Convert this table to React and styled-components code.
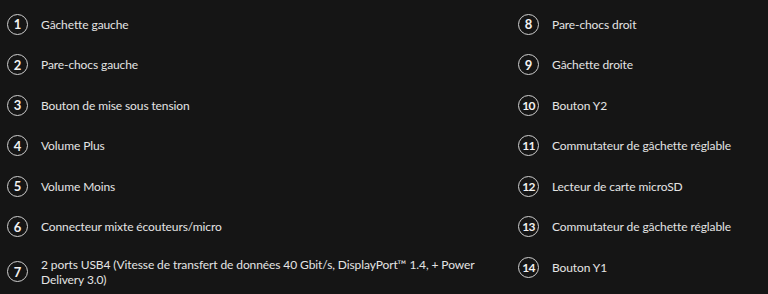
import React from 'react';
import styled, { createGlobalStyle } from 'styled-components';

const GlobalStyle = createGlobalStyle`
  html, body {
    margin: 0;
    padding: 0;
    background: #151515;
  }
`;

const Root = styled.div`
  width: 768px;
  height: 294px;
  box-sizing: border-box;
  padding: 4px 0 0 7px;
  display: grid;
  grid-template-columns: 480px 1fr;
  column-gap: 31px;
  font-family: Lato, 'Noto Sans', sans-serif;
  color: #e4e4e4;
  overflow: hidden;
`;

const List = styled.ul`
  list-style: none;
  margin: 0;
  padding: 0;
`;

const Item = styled.li`
  display: flex;
  align-items: center;
  gap: 13px;
  padding: 9.75px 0;
`;

const Badge = styled.span`
  flex: none;
  width: 21px;
  height: 21px;
  box-sizing: border-box;
  border: 1.5px solid #cfcfcf;
  border-radius: 50%;
  display: flex;
  align-items: center;
  justify-content: center;
  font-size: ${(p) => (p.$wide ? '12px' : '13px')};
  font-weight: 700;
  color: #f2f2f2;
  letter-spacing: ${(p) => (p.$wide ? '-0.6px' : '0')};
`;

const Label = styled.span`
  font-size: 12px;
  letter-spacing: -0.1px;
  line-height: 15px;
`;

const left = [
  'Gâchette gauche',
  'Pare-chocs gauche',
  'Bouton de mise sous tension',
  'Volume Plus',
  'Volume Moins',
  'Connecteur mixte écouteurs/micro',
  '2 ports USB4 (Vitesse de transfert de données 40 Gbit/s, DisplayPort™ 1.4, + Power Delivery 3.0)',
];

const right = [
  'Pare-chocs droit',
  'Gâchette droite',
  'Bouton Y2',
  'Commutateur de gâchette réglable',
  'Lecteur de carte microSD',
  'Commutateur de gâchette réglable',
  'Bouton Y1',
];

const Column = ({ items, start }) => (
  <List>
    {items.map((text, i) => {
      const n = start + i;
      return (
        <Item key={n}>
          <Badge $wide={n >= 10}>{n}</Badge>
          <Label>{text}</Label>
        </Item>
      );
    })}
  </List>
);

export default function App() {
  return (
    <>
      <GlobalStyle />
      <Root>
        <Column items={left} start={1} />
        <Column items={right} start={8} />
      </Root>
    </>
  );
}
